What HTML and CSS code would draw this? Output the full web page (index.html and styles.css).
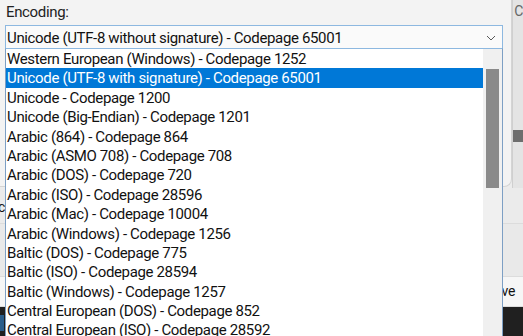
FILE: index.html
```html
<!DOCTYPE html>
<html lang="en">
<head>
    <meta charset="UTF-8">
    <title>Encoding</title>
    <link rel="stylesheet" href="styles.css">
</head>
<body>
    <div class="screen">
        <div class="top">
            <div class="dialog">
                <label class="field-label">Encoding:</label>
                <div class="select">
                    <span>Unicode (UTF-8 without signature) - Codepage 65001</span>
                    <svg class="chevron" width="10" height="6" viewBox="0 0 10 6">
                        <path d="M1 1 L5 5 L9 1" fill="none" stroke="#5a5a5a" stroke-width="1"/>
                    </svg>
                </div>
            </div>
            <div class="side">
                <span class="side-glyph">C</span>
                <div class="side-block"></div>
            </div>
        </div>
        <div class="behind">
            <div class="behind-row first"><span class="cut">c</span></div>
            <div class="behind-row tall"></div>
            <div class="behind-row btn-row"><span class="btn-text">ve</span></div>
            <div class="behind-bar"><span class="taskicon"></span></div>
        </div>

        <div class="dropdown">
            <ul class="options">
                <li>Western European (Windows) - Codepage 1252</li>
                <li class="selected">Unicode (UTF-8 with signature) - Codepage 65001</li>
                <li>Unicode - Codepage 1200</li>
                <li>Unicode (Big-Endian) - Codepage 1201</li>
                <li>Arabic (864) - Codepage 864</li>
                <li>Arabic (ASMO 708) - Codepage 708</li>
                <li>Arabic (DOS) - Codepage 720</li>
                <li>Arabic (ISO) - Codepage 28596</li>
                <li>Arabic (Mac) - Codepage 10004</li>
                <li>Arabic (Windows) - Codepage 1256</li>
                <li>Baltic (DOS) - Codepage 775</li>
                <li>Baltic (ISO) - Codepage 28594</li>
                <li>Baltic (Windows) - Codepage 1257</li>
                <li>Central European (DOS) - Codepage 852</li>
                <li>Central European (ISO) - Codepage 28592</li>
            </ul>
            <div class="scrollbar">
                <div class="thumb"></div>
            </div>
        </div>
    </div>
</body>
</html>
```

FILE: styles.css
```css
body {
    margin: 0;
    font-family: Roboto, "Noto Sans", sans-serif;
    font-size: 15px;
    letter-spacing: -0.35px;
    color: #111;
    background: #ececec;
    overflow: hidden;
}

.screen {
    position: relative;
    width: 523px;
    height: 336px;
    overflow: hidden;
}

.top {
    display: flex;
    height: 188px;
}

.dialog {
    width: 516px;
    height: 187px;
    background: #f3f3f3;
    border-right: 1px solid #d4d4d4;
    border-bottom: 1px solid #d4d4d4;
    border-bottom-right-radius: 8px;
    padding: 2px 0 0 5px;
    box-sizing: border-box;
}

.field-label {
    display: block;
    height: 23px;
    padding-left: 1px;
    line-height: 21px;
    color: #222;
}

.select {
    display: flex;
    align-items: center;
    justify-content: space-between;
    width: 498px;
    height: 24px;
    box-sizing: border-box;
    border: 1px solid #8db8e0;
    background: #fafafa;
    padding: 1px 6px 0 1px;
}

.side {
    flex: 1;
    background: #e4e4e4;
    border-left: 1px solid #cfcfcf;
    position: relative;
}

.side-glyph {
    display: block;
    margin: 3px 0 0 1px;
    color: #666;
    font-size: 14px;
}

.side-block {
    margin-top: 111px;
    height: 12px;
    background: #6e6e6e;
}

.behind {
    height: 148px;
    display: flex;
    flex-direction: column;
    background: #ebebeb;
}

.behind-row {
    border-bottom: 1px solid #dcdcdc;
}

.behind-row.first {
    height: 35px;
    position: relative;
}

.cut {
    position: absolute;
    left: -2px;
    top: 11px;
    font-size: 14px;
}

.behind-row.tall {
    height: 52px;
    background: #e9e9e9;
}

.behind-row.btn-row {
    height: 29px;
    background: #f6f6f6;
    text-align: right;
}

.btn-text {
    display: inline-block;
    margin-right: 8px;
    line-height: 29px;
    font-size: 14px;
}

.behind-bar {
    flex: 1;
    background: #202020;
    position: relative;
}

.taskicon {
    position: absolute;
    left: 0;
    top: 8px;
    width: 4px;
    height: 16px;
    background: #2a5d8a;
}

.dropdown {
    position: absolute;
    left: 5px;
    top: 48px;
    width: 498px;
    height: 300px;
    display: flex;
    background: #fff;
    border: 1px solid #7d9fc4;
    border-top-color: #8db8e0;
    box-sizing: border-box;
}

.options {
    list-style: none;
    margin: 0;
    padding: 0;
    flex: 1;
}

.options li {
    height: 19.4px;
    line-height: 20.4px;
    padding-left: 1px;
    white-space: nowrap;
}

.options li.selected {
    background: #0078d7;
    color: #fff;
}

.scrollbar {
    width: 19px;
    background: #f0f0f0;
    padding: 20px 3px 0 3px;
    box-sizing: border-box;
}

.thumb {
    height: 119px;
    background: #8a8a8a;
}
```
